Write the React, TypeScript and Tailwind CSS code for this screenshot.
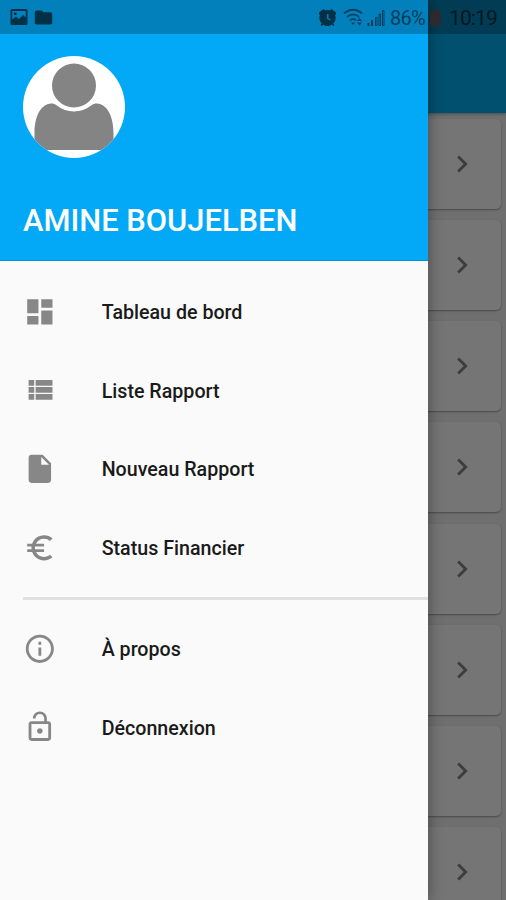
import type { ComponentType } from 'react'
import {
  MdChevronRight,
  MdDashboard,
  MdEuroSymbol,
  MdFolder,
  MdInfoOutline,
  MdInsertDriveFile,
  MdLockOpen
} from 'react-icons/md'

interface MenuItem {
  icon: ComponentType<{ className?: string }>
  label: string
}

function ListIcon({ className }: { className?: string }) {
  return (
    <svg viewBox="0 0 24 24" fill="currentColor" className={className}>
      <path d="M4 14h4v-4H4v4zm0 5h4v-4H4v4zM4 9h4V5H4v4zm5 5h12v-4H9v4zm0 5h12v-4H9v4zM9 5v4h12V5H9z" />
    </svg>
  )
}

const mainItems: MenuItem[] = [
  { icon: MdDashboard, label: 'Tableau de bord' },
  { icon: ListIcon, label: 'Liste Rapport' },
  { icon: MdInsertDriveFile, label: 'Nouveau Rapport' },
  { icon: MdEuroSymbol, label: 'Status Financier' }
]

const footerItems: MenuItem[] = [
  { icon: MdInfoOutline, label: 'À propos' },
  { icon: MdLockOpen, label: 'Déconnexion' }
]

function MenuRow({ icon: Icon, label }: MenuItem) {
  return (
    <li className="flex h-[78.7px] items-center pl-[23px]">
      <Icon className="size-[33.7px] shrink-0 text-[#878787]" />
      <span className="ml-[45px] pt-[3px] text-[19.65px] font-medium leading-6 text-[#1a1a1a]">{label}</span>
    </li>
  )
}

function Avatar() {
  return (
    <svg viewBox="0 0 102 102" className="size-[102px]">
      <clipPath id="avatar-clip">
        <circle cx="51" cy="51" r="51" />
      </clipPath>
      <g clipPath="url(#avatar-clip)">
        <rect width="102" height="102" fill="#fff" />
        <circle cx="51" cy="29.5" r="22" fill="#848484" />
        <path
          d="M11.500 94V77C11.500 60 18 48 28 47.500C30 47.400 32 48 33.500 49.200C44 57.500 58 57.500 68.500 49.200C70 48 72 47.400 74 47.500C84 48 90.500 60 90.500 77V94Z"
          fill="#848484"
        />
      </g>
    </svg>
  )
}

function StatusBar() {
  return (
    <div className="absolute inset-x-0 top-0 flex h-[34px] items-center bg-black/24 text-black/62">
      <svg viewBox="0 0 18 16" className="ml-[10px] h-4 w-[18px]">
        <path
          fillRule="evenodd"
          fill="currentColor"
          d="M2 0h14a1.500 1.500 0 0 1 1.500 1.500v13A1.500 1.500 0 0 1 16 16H2a1.500 1.500 0 0 1-1.500-1.500v-13A1.500 1.500 0 0 1 2 0ZM2.300 2v8.500L6 7.500l3 2.500 4-4 2.700 2.500V2ZM4 3.500h2.500V6H4Z"
        />
      </svg>
      <MdFolder className="ml-[5px] size-[21px]" />

      <div className="ml-auto flex items-center pr-[10px]">
        {/* Alarm */}
        <svg viewBox="0 0 17 17" className="size-[17px]">
          <path
            fillRule="evenodd"
            fill="currentColor"
            d="M4.500 0 6 1.300a8 8 0 0 1 5 0L12.500 0 17 3.500v2l-1 .5a8 8 0 0 1-1.700 8.500L15.500 16l-1 1-1.800-1.200a8 8 0 0 1-8.400 0L2.500 17l-1-1 1.200-1.500A8 8 0 0 1 1 6l-1-.5v-2ZM8 5v4.700l3 1.800.8-1.200L9.500 9V5Z"
          />
        </svg>
        {/* Wifi */}
        <svg viewBox="0 0 22 18" className="ml-[7px] h-[18px] w-[22px] text-black/50" fill="none" stroke="currentColor" strokeWidth="1.800">
          <path d="M1 5.500C6.500 .5 13.500 .5 19 5.500M4 9C8 5.500 12 5.500 16 9M7 12.300c2-1.800 4-1.800 6 0" />
          <path d="M8 14.500h4l-2 2.500zM14 13l2.500-3 2.500 3zM14 14.500h5l-2.500 3z" fill="currentColor" stroke="none" />
        </svg>
        {/* Signal */}
        <svg viewBox="0 0 18 17" className="ml-[2px] h-[17px] w-[18px] text-black/50" fill="none" stroke="currentColor">
          <path d="M1.500 14v3M5 11v6" strokeWidth="2" />
          <path d="M8.500 8.500h1.500v8H8.500zM12 5h1.500v11.500H12zM15.500 1.500H17v15h-1.500z" strokeWidth="1" />
        </svg>
        <span className="ml-[5px] w-[36px] pt-px text-[20px] leading-6 tracking-[-0.8px] text-black/54">86%</span>
        <svg viewBox="0 0 11 17" className="ml-[4px] h-[17px] w-[11px]">
          <path d="M3.500 0h4v2H11v15H0V2h3.500z" fill="#3b2526" fillOpacity=".75" />
        </svg>
        <span className="ml-[8px] w-[47px] pt-px text-[21px] leading-6 tracking-[-0.9px]">10:19</span>
      </div>
    </div>
  )
}

function ReportList() {
  return (
    <div className="flex h-full flex-col bg-[#6f6f6f]">
      <div className="h-[113px] shrink-0 bg-[#02506f] shadow-[0_1px_3px_rgba(0,0,0,0.35)]" />
      <div className="flex flex-col gap-[11.2px] px-[5px] pt-[5.800px]">
        {Array.from({ length: 8 }, (_, i) => (
          <div
            key={i}
            className="flex h-[90px] shrink-0 items-center justify-end rounded-[5px] bg-[#757575] pr-[22px] shadow-[0_1px_2px_rgba(0,0,0,0.35)]"
          >
            <MdChevronRight className="size-[34px] text-[#3d3d3d]" />
          </div>
        ))}
      </div>
    </div>
  )
}

export default function App() {
  return (
    <div className="relative h-[900px] w-[506px] overflow-hidden font-[Roboto,sans-serif]">
      <ReportList />

      {/* Drawer */}
      <aside className="absolute inset-y-0 left-0 flex w-[428px] flex-col bg-[#fafafa] shadow-[0_0_14px_rgba(0,0,0,0.4)]">
        <header className="flex h-[261px] shrink-0 flex-col border-b border-[#0793d4] bg-[#03a9f7] pl-[23px] pt-[56px]">
          <Avatar />
          <h1 className="mt-[45px] text-[30.900px] font-medium leading-9 text-white">AMINE BOUJELBEN</h1>
        </header>
        <nav className="pt-[11px]">
          <ul>
            {mainItems.map((item) => (
              <MenuRow key={item.label} {...item} />
            ))}
          </ul>
          <div className="flex h-[22.5px] items-center pl-[23px]">
            <div className="h-[3px] w-full bg-[#e1e1e1]" />
          </div>
          <ul>
            {footerItems.map((item) => (
              <MenuRow key={item.label} {...item} />
            ))}
          </ul>
        </nav>
      </aside>

      <StatusBar />
    </div>
  )
}
